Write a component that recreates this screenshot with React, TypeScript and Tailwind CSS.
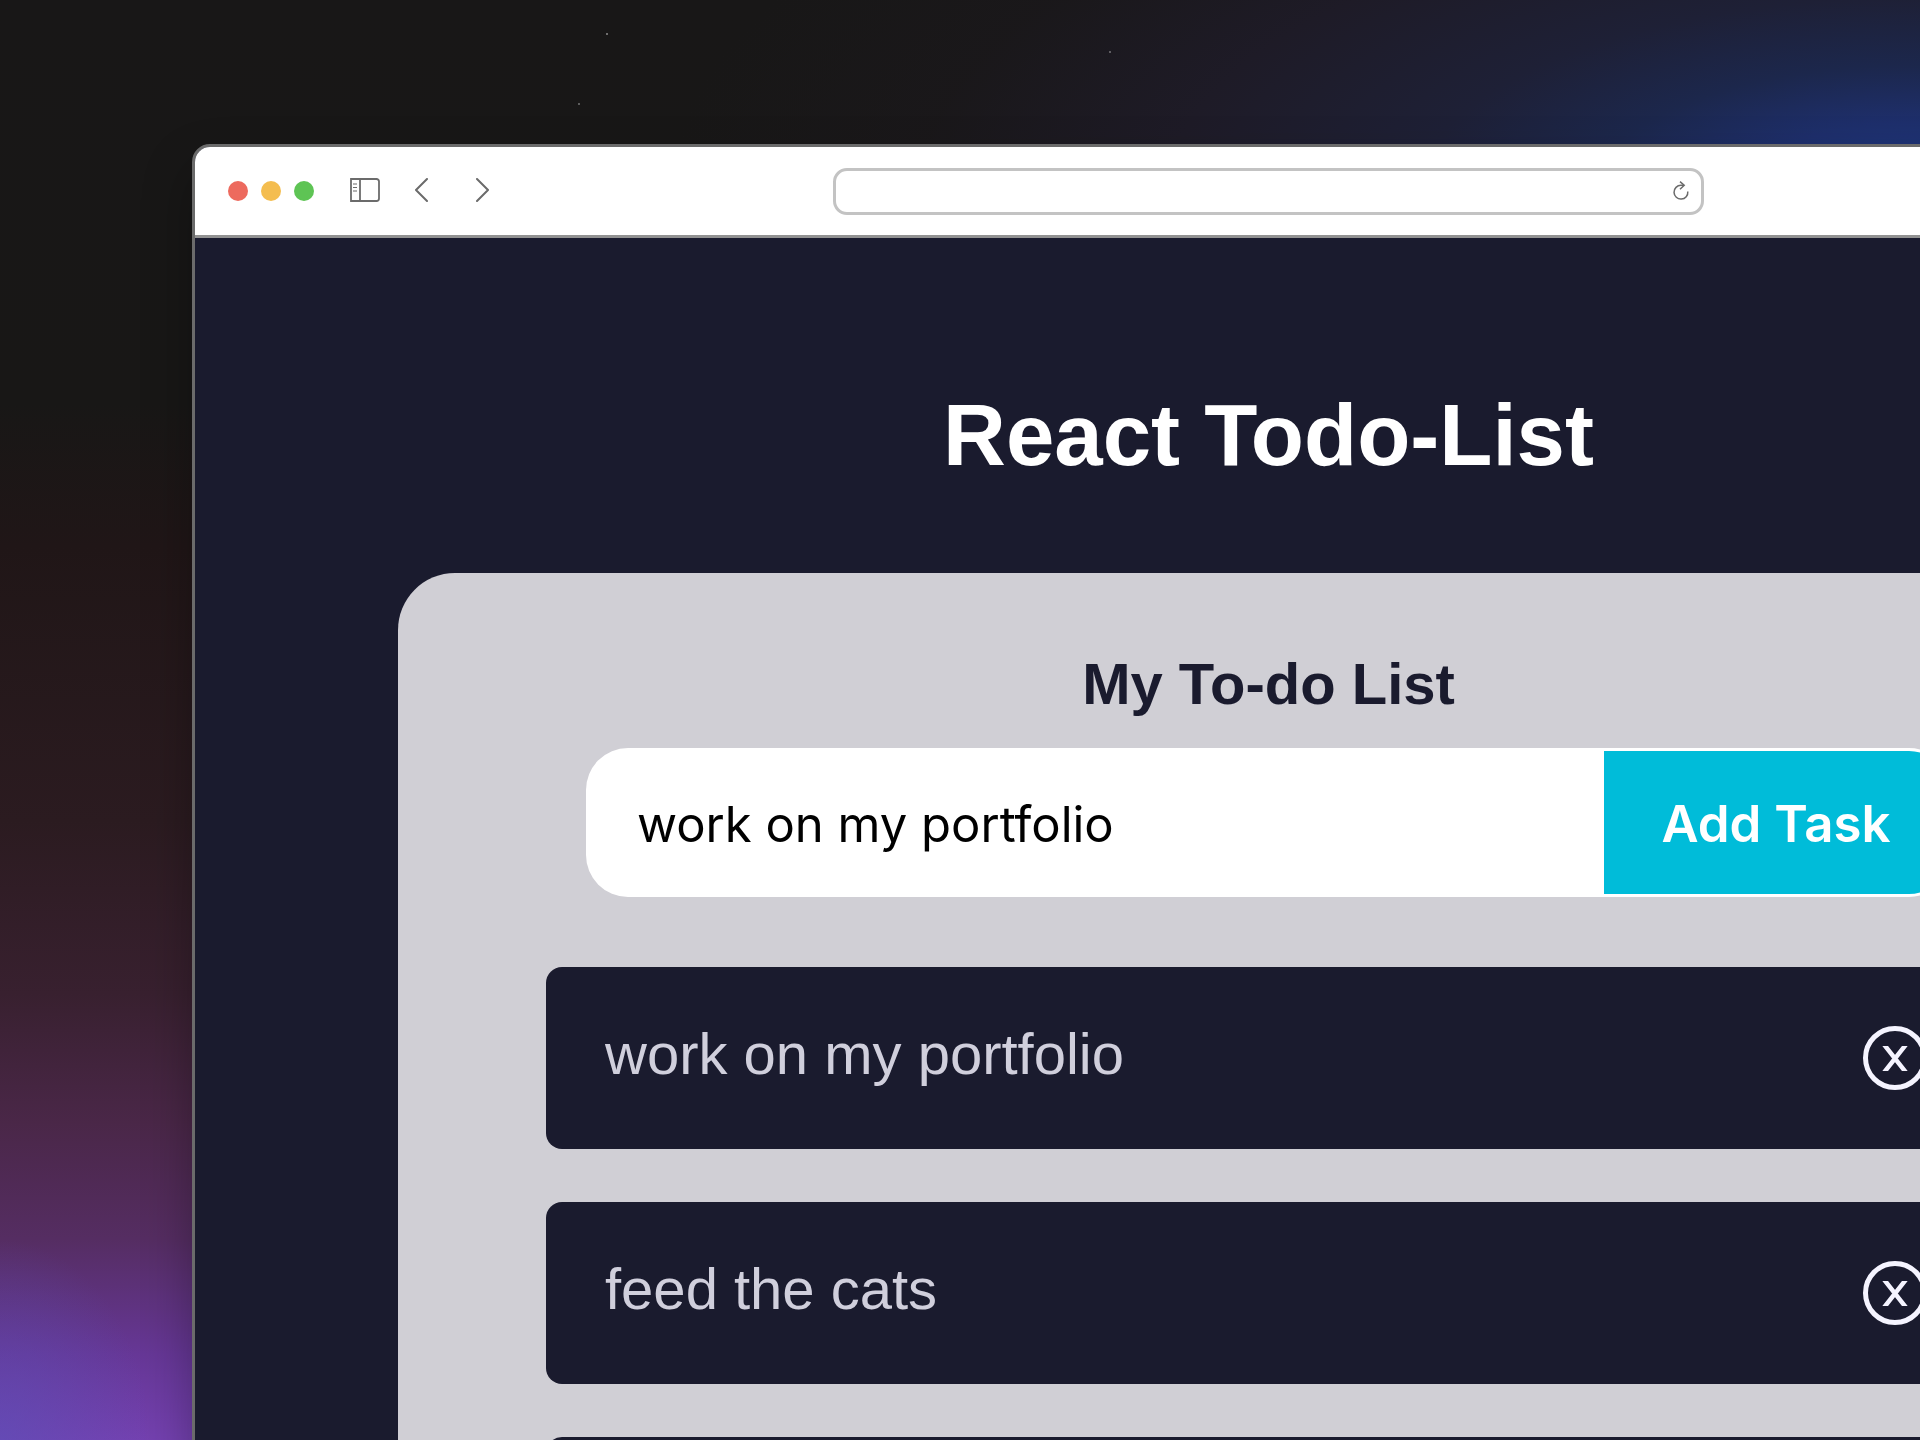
import React, { useState } from "react";

interface Task {
  id: number;
  text: string;
}

const initialTasks: Task[] = [
  { id: 1, text: "work on my portfolio" },
  { id: 2, text: "feed the cats" },
  { id: 3, text: "" },
];

const SidebarIcon = () => (
  <svg viewBox="0 0 30 24" className="w-[30px] h-6" fill="none" stroke="#6b6b6b">
    <path d="M1 1h25.500a2.500 2.500 0 0 1 2.500 2.500v17a2.500 2.500 0 0 1-2.500 2.500H1z" strokeWidth="1.800" />
    <path d="M10 1v22" strokeWidth="1.800" />
    <path d="M3 6h4M3 9.500h4M3 13h4" strokeWidth="1.200" />
  </svg>
);

const ChevronIcon = ({ d }: { d: string }) => (
  <svg
    viewBox="0 0 14 24"
    className="w-3.5 h-6"
    fill="none"
    stroke="#6b6b6b"
    strokeWidth="2"
    strokeLinecap="round"
    strokeLinejoin="round"
  >
    <path d={d} />
  </svg>
);

const ReloadIcon = () => (
  <svg viewBox="0 0 16 20" className="w-4 h-5" fill="none" stroke="#6b6b6b" strokeWidth="1.500">
    <path d="M14.800 10.500A6.900 6.900 0 1 1 8 4.300h3" />
    <path d="M7 .6l4.200 3.700L7 8.200" />
  </svg>
);

const Toolbar = () => (
  <header className="flex justify-between items-center bg-white px-[33px] border-[#929292] border-b-[3px] h-[91px]">
    <div className="flex flex-1 items-center">
      <div className="flex gap-[13px]">
        <span className="bg-[#ed6a5e] rounded-full w-5 h-5" />
        <span className="bg-[#f4bd4f] rounded-full w-5 h-5" />
        <span className="bg-[#5ec454] rounded-full w-5 h-5" />
      </div>
      <div className="flex items-center mb-0.5 ml-9">
        <button type="button" aria-label="Toggle sidebar">
          <SidebarIcon />
        </button>
        <button type="button" aria-label="Back" className="ml-[34px]">
          <ChevronIcon d="M13 1L2 12l11 11" />
        </button>
        <button type="button" aria-label="Forward" className="ml-[48px]">
          <ChevronIcon d="M1 1l11 11L1 23" />
        </button>
      </div>
    </div>
    <div className="flex items-center border-[#c3c3c3] border-[3px] rounded-[14px] w-[871px] h-[47px] pr-3">
      <input type="text" aria-label="Address" className="flex-1 px-4 outline-none h-full" />
      <button type="button" aria-label="Reload">
        <ReloadIcon />
      </button>
    </div>
    <div className="flex-1" />
  </header>
);

const TaskForm = ({ onAdd }: { onAdd: (text: string) => void }) => {
  const [value, setValue] = useState("work on my portfolio");

  const handleSubmit = (e: React.FormEvent) => {
    e.preventDefault();
    if (value.trim()) onAdd(value);
  };

  return (
    <form onSubmit={handleSubmit} className="flex mx-10 h-[149px] font-['Inter',sans-serif]">
      <input
        type="text"
        aria-label="New task"
        value={value}
        onChange={(e) => setValue(e.target.value)}
        className="flex-1 bg-white px-[51px] pt-1 rounded-l-[42px] outline-none min-w-0 text-[49px] text-black"
      />
      <button
        type="submit"
        className="bg-[#00bcd9] pt-1 border-white border-y-[3px] border-r-[3px] rounded-r-[42px] w-[347px] font-semibold text-[51px] text-white"
      >
        Add Task
      </button>
    </form>
  );
};

const TaskItem = ({ task, onRemove }: { task: Task; onRemove: (id: number) => void }) => (
  <li className="flex justify-between items-center bg-[#1a1b2e] pr-16 pl-[59px] rounded-2xl h-[182px]">
    <span className="pb-2 text-[#d0cfdc] text-[58px] leading-[64px]">{task.text}</span>
    <button
      type="button"
      aria-label="Remove task"
      onClick={() => onRemove(task.id)}
      className="flex justify-center items-center border-[#f5f4ff] border-[5px] rounded-full w-16 h-16 text-[#f5f4ff]"
    >
      <svg viewBox="0 0 26 25" className="w-[26px] h-[25px]" fill="none" stroke="currentColor" strokeWidth="4.500">
        <path d="M2-1.500l22 28M24-1.500l-22 28" />
      </svg>
    </button>
  </li>
);

export default function App() {
  const [tasks, setTasks] = useState(initialTasks);

  const addTask = (text: string) => setTasks([...tasks, { id: Date.now(), text }]);
  const removeTask = (id: number) => setTasks(tasks.filter((task) => task.id !== id));

  return (
    <div className="relative bg-[radial-gradient(ellipse_1250px_480px_at_100%_190px,#1e3a86_0%,#1e2f6c_14%,#1c274c_26%,#1e2036_40%,#1e1b27_60%,#1b181c99_80%,#18171600_100%),radial-gradient(ellipse_150px_200px_at_0%_100%,#5a50b899_0%,#5a50b800_100%),linear-gradient(to_bottom,#181717_0%,#181716_28%,#201617_38%,#2b1b20_57%,#38202f_69%,#4a2748_78%,#552d62_86%,#663796_94%,#7441b0_100%)] pt-36 pl-[10%] h-screen overflow-hidden font-['Liberation_Sans',sans-serif]">
      {/* Stars */}
      <span className="top-[33px] left-[606px] absolute bg-white/50 rounded-full w-0.5 h-0.5" />
      <span className="top-[103px] left-[578px] absolute bg-white/40 rounded-full w-0.5 h-0.5" />
      <span className="top-[51px] left-[1109px] absolute bg-white/40 rounded-full w-0.5 h-0.5" />

      {/* Browser window, runs past the right edge */}
      <div className="bg-[#1a1b2e] shadow-[0_24px_50px_rgba(0,0,0,0.3)] -mr-[425px] border-[#6b6b6b] border-[3px] rounded-[18px] overflow-hidden">
        <Toolbar />
        <main className="px-[203px] pt-[147px]">
          <h1 className="font-bold text-[87px] text-white text-center leading-[100px]">
            React Todo-List
          </h1>
          <section className="bg-[#d0cfd5] mt-[88px] px-[148px] pt-[79px] pb-20 rounded-[57px]">
            <h2 className="font-bold text-[#1a1b2e] text-[58px] text-center leading-[64px]">
              My To-do List
            </h2>
            <div className="mt-8">
              <TaskForm onAdd={addTask} />
            </div>
            <ul className="flex flex-col gap-[53px] mt-[70px]">
              {tasks.map((task) => (
                <TaskItem key={task.id} task={task} onRemove={removeTask} />
              ))}
            </ul>
          </section>
        </main>
      </div>
    </div>
  );
}
